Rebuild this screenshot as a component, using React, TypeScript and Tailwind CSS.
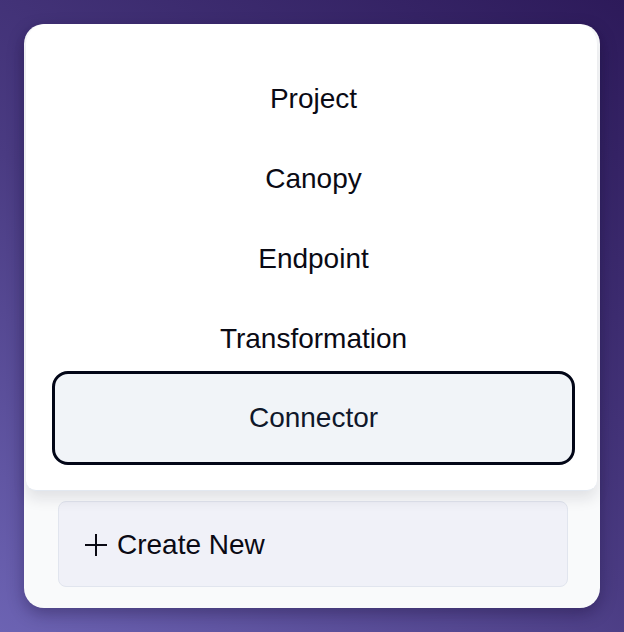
import React from "react";

const items = ["Project", "Canopy", "Endpoint", "Transformation", "Connector"];

const App: React.FC = () => {
  const selected = "Connector";

  return (
    <div
      className="w-full h-[632px] p-6 bg-[linear-gradient(35deg,#6c63b3_0%,#4a3b82_45%,#2d1a5a_100%)]"
      style={{ fontFamily: '"Liberation Sans", Arial, sans-serif' }}
    >
      <div className="relative h-[584px] w-[576px] rounded-[20px] bg-[#f9fafb] shadow-[0_6px_16px_rgba(20,10,50,0.35)] flex flex-col justify-end pl-[34px] pr-[32px] pb-[21px]">
        {/* create button */}
        <button className="h-[86px] w-full flex items-center gap-[10px] pl-[26px] pt-[2px] rounded-lg bg-[#f0f1f8] border border-[#e1e5ee] text-[28px] text-[#0a0a14]">
          <svg width="22" height="24" viewBox="0 0 22 24" className="shrink-0">
            <path d="M0 12h22M11 1v22" stroke="#0a0a14" strokeWidth="2" fill="none" />
          </svg>
          <span>Create New</span>
        </button>

        {/* dropdown menu over the card */}
        <div className="absolute top-0 left-[2px] w-[571px] h-[467px] bg-white rounded-t-[20px] rounded-b-[10px] border-b border-[#e2e8f0] shadow-[0_8px_14px_rgba(15,23,42,0.10)] pt-[35px]">
          {items.map((label) =>
            label === selected ? (
              <div
                key={label}
                className="-mt-[8px] -mb-[6px] h-[94px] ml-[26px] mr-[22px] flex items-center justify-center rounded-2xl border-[3px] border-[#020617] bg-[#f1f4f8] text-[28px] text-[#0f172a]"
              >
                {label}
              </div>
            ) : (
              <div
                key={label}
                className="h-[80px] pl-1 flex items-center justify-center text-[28px] text-[#0a0a14]"
              >
                {label}
              </div>
            )
          )}
        </div>
      </div>
    </div>
  );
};

export default App;
